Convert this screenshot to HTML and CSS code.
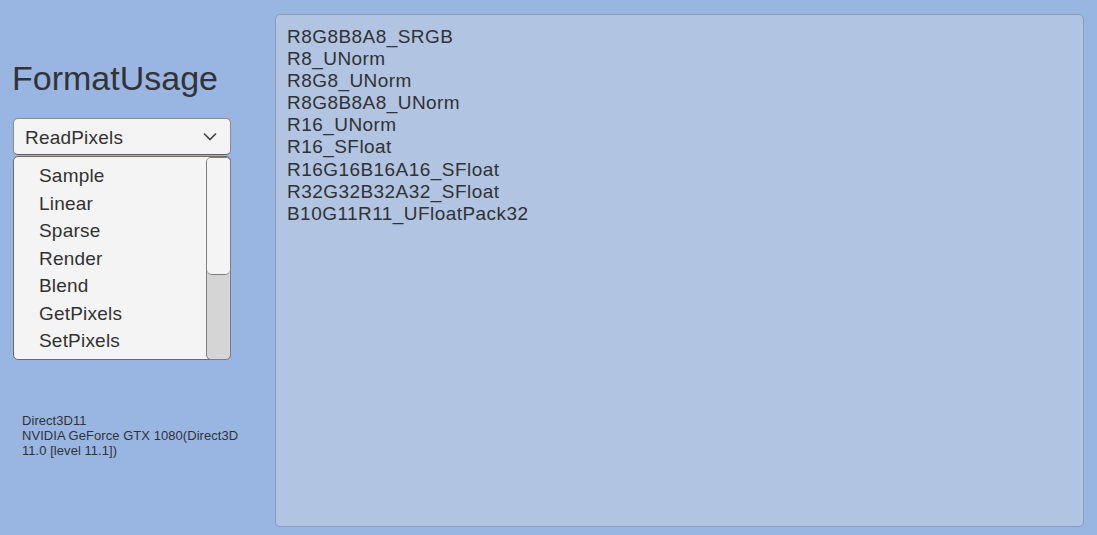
FILE: index.html
```html
<!DOCTYPE html>
<html>
<head>
<meta charset="utf-8">
<link rel="stylesheet" href="styles.css">
</head>
<body>
<div class="app">
  <div class="side">
    <div class="title">FormatUsage</div>
    <div class="dropdown">
      <span class="dd-label">ReadPixels</span>
      <svg class="chev" width="14" height="9" viewBox="0 0 14 9"><path d="M1 1.5 L7 7.5 L13 1.5" fill="none" stroke="#444" stroke-width="1.6"/></svg>
    </div>
    <div class="list">
      <div class="items">
        <div class="item">Sample</div>
        <div class="item">Linear</div>
        <div class="item">Sparse</div>
        <div class="item">Render</div>
        <div class="item">Blend</div>
        <div class="item">GetPixels</div>
        <div class="item">SetPixels</div>
      </div>
      <div class="scrollbar"><div class="handle"></div></div>
    </div>
    <div class="info">Direct3D11<br>NVIDIA GeForce GTX 1080(Direct3D 11.0 [level 11.1])</div>
  </div>
  <div class="panel">
    <div class="fmt">R8G8B8A8_SRGB</div>
    <div class="fmt">R8_UNorm</div>
    <div class="fmt">R8G8_UNorm</div>
    <div class="fmt">R8G8B8A8_UNorm</div>
    <div class="fmt">R16_UNorm</div>
    <div class="fmt">R16_SFloat</div>
    <div class="fmt">R16G16B16A16_SFloat</div>
    <div class="fmt">R32G32B32A32_SFloat</div>
    <div class="fmt">B10G11R11_UFloatPack32</div>
  </div>
</div>
</body>
</html>
```

FILE: styles.css
```css
html, body {
  margin: 0;
  padding: 0;
  height: 100%;
}
body {
  background: #99b6e3;
  font-family: "Liberation Sans", Arial, sans-serif;
  color: #323232;
  overflow: hidden;
}
.app {
  display: flex;
  height: 535px;
  box-sizing: border-box;
  padding: 14px 13px 8px 13px;
}
.side {
  width: 218px;
  flex: none;
  display: flex;
  flex-direction: column;
}
.title {
  margin-top: 44px;
  margin-left: -1px;
  font-size: 34px;
  line-height: 40px;
  color: #333;
}
.dropdown {
  margin-top: 20px;
  height: 37px;
  box-sizing: border-box;
  background: #f4f4f4;
  border: 1px solid #8a8a8a;
  border-bottom-color: #5c5c5c;
  border-radius: 5px;
  display: flex;
  align-items: center;
  justify-content: space-between;
  padding: 2px 13px 0 11px;
  font-size: 19px;
  letter-spacing: 0.2px;
}
.chev {
  display: block;
  margin-top: -2px;
}
.list {
  margin-top: 1px;
  height: 204px;
  box-sizing: border-box;
  background: #f4f4f4;
  border: 1px solid #6b6b6b;
  border-radius: 5px;
  display: flex;
}
.items {
  flex: 1;
  padding: 5px 0 0 25px;
}
.item {
  font-size: 19px;
  line-height: 27.5px;
  height: 27.5px;
  letter-spacing: 0.2px;
}
.scrollbar {
  width: 25px;
  flex: none;
  margin: 0 -1px -1px 0;
  background: #d5d5d5;
  border: 1px solid #7e7e7e;
  border-radius: 5px;
  box-sizing: border-box;
  overflow: hidden;
}
.handle {
  height: 116px;
  background: #f4f4f4;
  border-bottom: 1px solid #7e7e7e;
  border-radius: 0 0 5px 5px;
}
.info {
  margin-top: 53px;
  margin-left: 9px;
  width: 225px;
  font-size: 13px;
  line-height: 15px;
  letter-spacing: 0.05px;
  color: #333;
}
.panel {
  flex: 1;
  margin-left: 44px;
  background: #b1c4e1;
  border: 1px solid #8a9bb8;
  border-radius: 5px;
  padding: 11px 11px;
}
.fmt {
  font-size: 19px;
  line-height: 22.1px;
  letter-spacing: 0.45px;
}
```
